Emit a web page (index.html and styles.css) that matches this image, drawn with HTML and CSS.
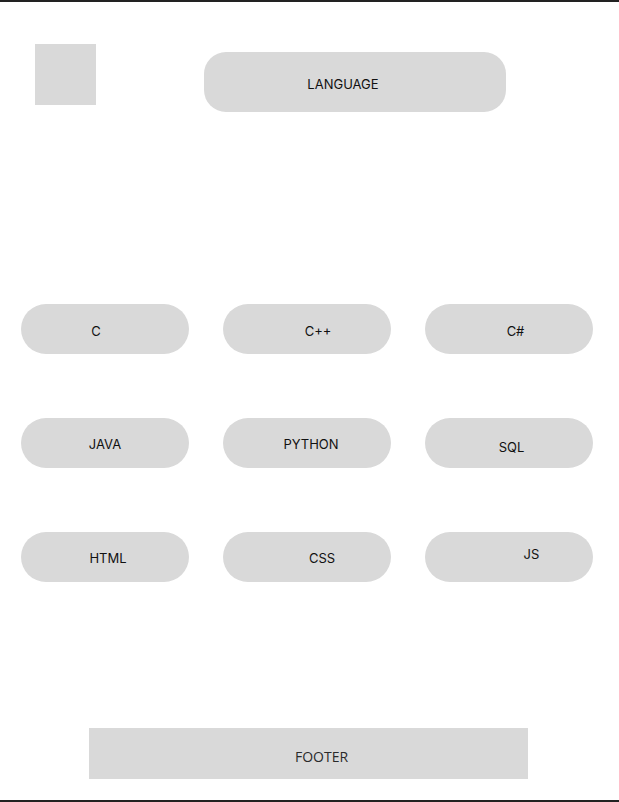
FILE: index.html
```html
<!DOCTYPE html>
<html lang="en">
<head>
<meta charset="utf-8">
<title>Language</title>
<link rel="stylesheet" href="styles.css">
</head>
<body>
<div class="page">
  <header class="top">
    <div class="logo"></div>
    <div class="title">LANGUAGE</div>
  </header>
  <main class="grid">
    <div class="btn s-c">C</div>
    <div class="btn s-cpp">C++</div>
    <div class="btn s-cs">C#</div>
    <div class="btn s-java">JAVA</div>
    <div class="btn s-py">PYTHON</div>
    <div class="btn s-sql">SQL</div>
    <div class="btn s-html">HTML</div>
    <div class="btn s-css">CSS</div>
    <div class="btn s-js">JS</div>
  </main>
  <footer class="footer">FOOTER</footer>
</div>
</body>
</html>
```
FILE: styles.css
```css
* { box-sizing: border-box; }
html, body { margin: 0; padding: 0; background: #fff; }
.page {
  height: 802px;
  border-top: 2px solid #222;
  border-bottom: 2px solid #222;
  display: flex;
  flex-direction: column;
  font-family: Inter, "Liberation Sans", sans-serif;
  color: #111;
}
.top {
  display: flex;
  align-items: flex-start;
  padding: 42px 0 0 35px;
}
.logo {
  width: 61px;
  height: 61px;
  background: #d9d9d9;
}
.title {
  margin: 8px 0 0 108px;
  width: 302px;
  height: 60px;
  border-radius: 22px;
  background: #d9d9d9;
  display: flex;
  align-items: center;
  justify-content: center;
  font-size: 13px;
  padding: 3px 24px 0 0;
}
.grid {
  margin: 192px 0 0 21px;
  display: grid;
  grid-template-columns: repeat(3, 168px);
  grid-auto-rows: 50px;
  column-gap: 34px;
  row-gap: 64px;
}
.btn {
  background: #d9d9d9;
  border-radius: 25px;
  display: flex;
  align-items: center;
  justify-content: center;
  font-size: 13px;
}
.s-c { padding: 4px 18px 0 0; }
.s-cpp { padding: 4px 0 0 22px; }
.s-cs { padding: 4px 0 0 13px; }
.s-java { padding: 1px 0 0 0; }
.s-py { padding: 1px 0 0 8px; }
.s-sql { padding: 7px 0 0 5px; }
.s-html { padding: 1px 0 0 6px; }
.s-css { padding: 1px 0 0 30px; }
.s-js { padding: 0 0 6px 45px; }
.footer {
  margin: 146px 0 0 89px;
  width: 439px;
  height: 51px;
  background: #d9d9d9;
  display: flex;
  align-items: center;
  justify-content: center;
  font-family: "Open Sans", "Noto Sans", sans-serif;
  font-size: 14px;
  color: #2a2a2a;
  padding: 5px 0 0 26px;
}
```
